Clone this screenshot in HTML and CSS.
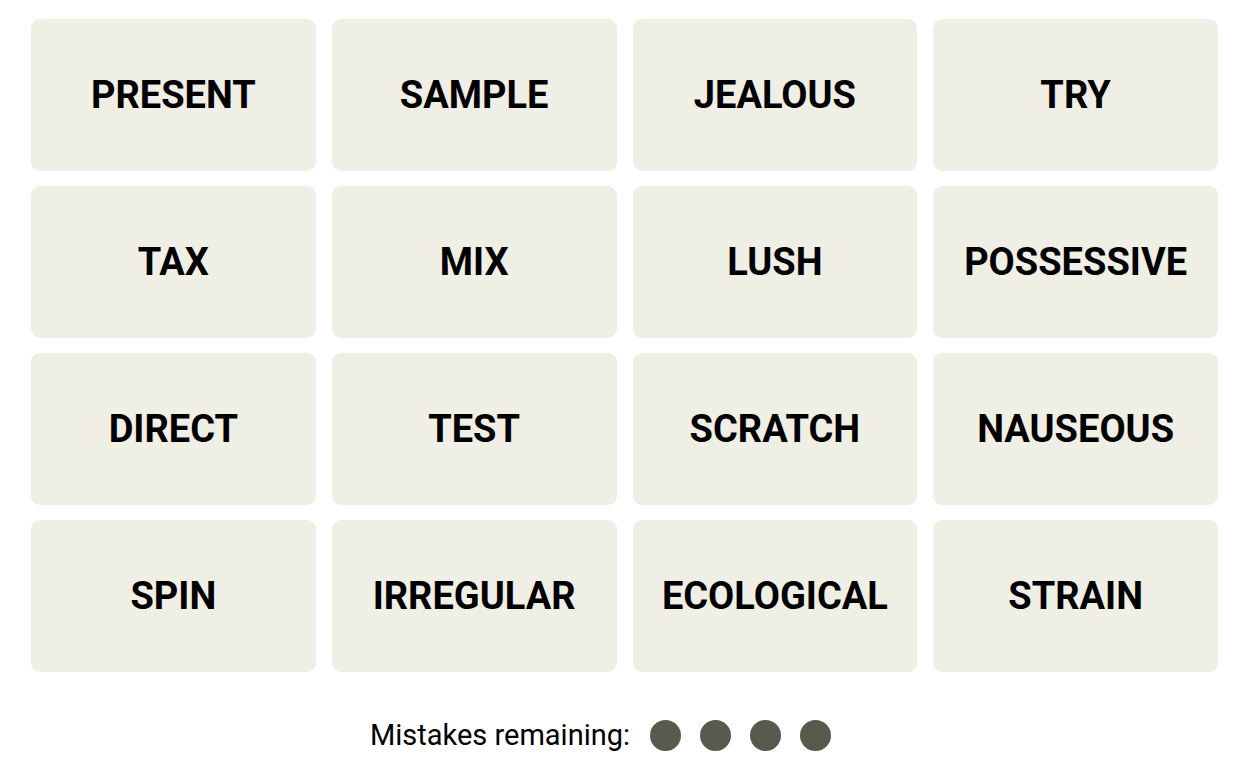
FILE: index.html
```html
<!DOCTYPE html>
<html>
<head>
<meta charset="utf-8">
<link rel="stylesheet" href="styles.css">
</head>
<body>
<main class="game">
  <div class="board">
    <div class="tile">PRESENT</div>
    <div class="tile">SAMPLE</div>
    <div class="tile">JEALOUS</div>
    <div class="tile">TRY</div>
    <div class="tile">TAX</div>
    <div class="tile">MIX</div>
    <div class="tile">LUSH</div>
    <div class="tile">POSSESSIVE</div>
    <div class="tile">DIRECT</div>
    <div class="tile">TEST</div>
    <div class="tile">SCRATCH</div>
    <div class="tile">NAUSEOUS</div>
    <div class="tile">SPIN</div>
    <div class="tile">IRREGULAR</div>
    <div class="tile">ECOLOGICAL</div>
    <div class="tile">STRAIN</div>
  </div>
  <div class="mistakes">
    <span class="label">Mistakes remaining:</span>
    <span class="dots">
      <span class="dot"></span>
      <span class="dot"></span>
      <span class="dot"></span>
      <span class="dot"></span>
    </span>
  </div>
</main>
</body>
</html>
```

FILE: styles.css
```css
html, body {
  margin: 0;
  padding: 0;
  background: #ffffff;
}

.game {
  padding: 19px 32px 0 31px;
  font-family: Roboto, "Liberation Sans", sans-serif;
  color: #000;
}

.board {
  display: grid;
  grid-template-columns: repeat(4, 1fr);
  grid-auto-rows: 152px;
  column-gap: 16px;
  row-gap: 15px;
  width: 1187px;
}

.tile {
  background: #efefe6;
  border-radius: 9px;
  display: flex;
  align-items: center;
  justify-content: center;
  font-weight: 700;
  font-size: 38px;
  letter-spacing: 0;
}

.mistakes {
  box-sizing: border-box;
  display: flex;
  align-items: center;
  justify-content: center;
  gap: 20px;
  margin-top: 46px;
  padding-right: 48px;
  width: 1187px;
}

.label {
  font-size: 29px;
  font-weight: 400;
}

.dots {
  display: flex;
  gap: 19px;
}

.dot {
  width: 31px;
  height: 31px;
  border-radius: 50%;
  background: #5a594e;
}
```
